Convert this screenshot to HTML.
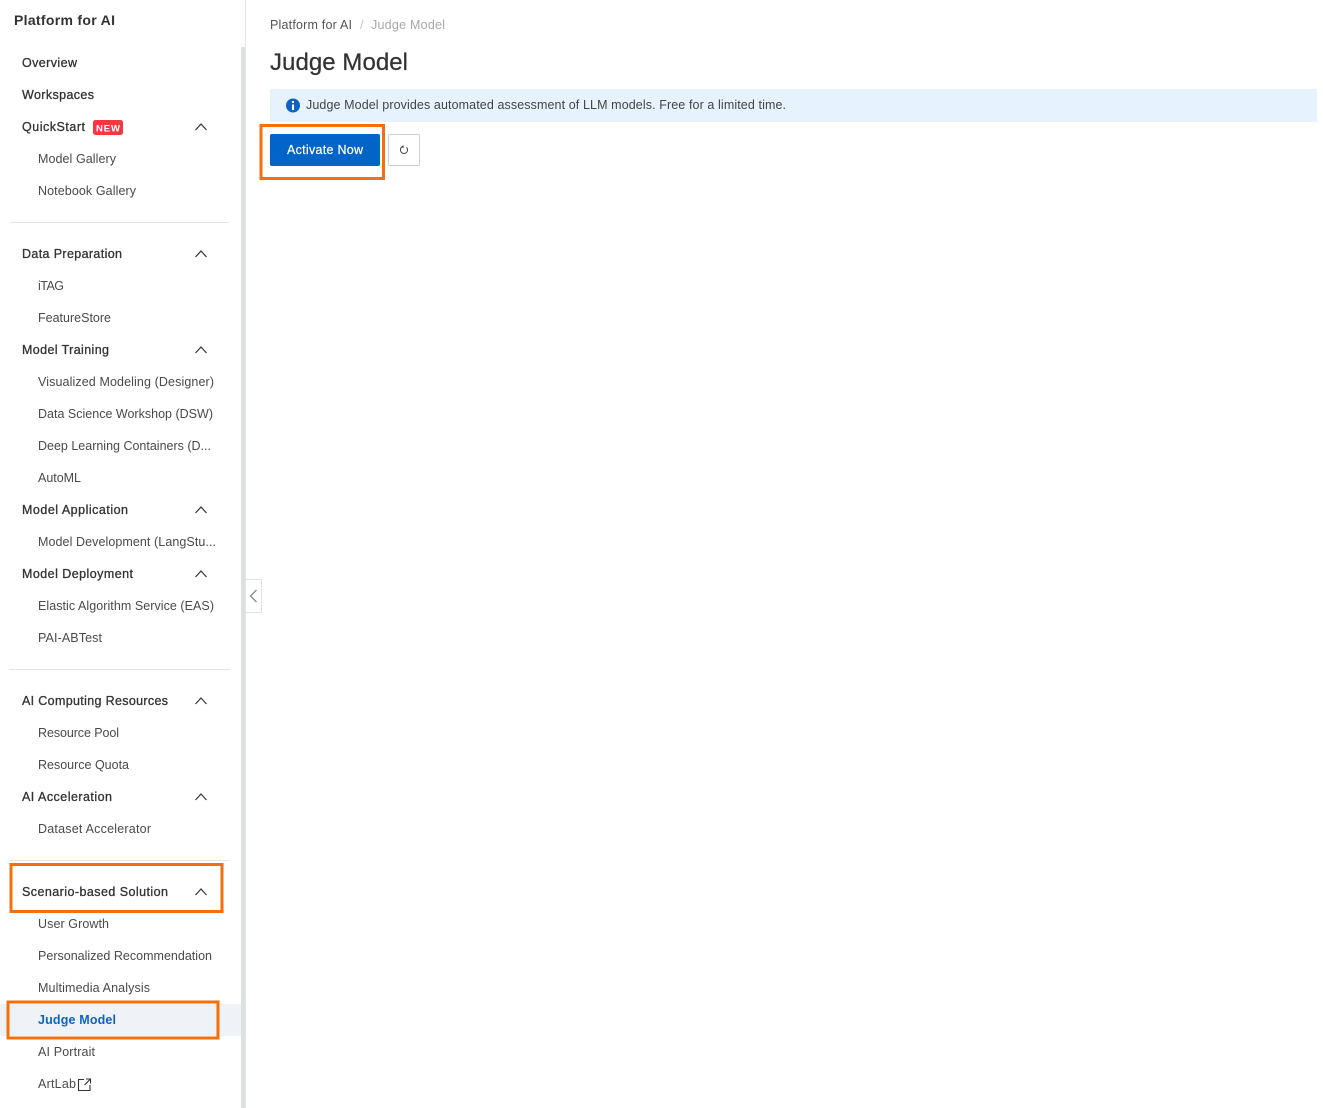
<!DOCTYPE html>
<html lang="en">
<head>
<meta charset="utf-8">
<title>Judge Model</title>
<style>
html,body{margin:0;padding:0;background:#fff;width:1323px;height:1108px;overflow:hidden}
svg{display:block}
text{font-family:"Liberation Sans",sans-serif;font-size:12.5px;fill:#333}
.h{fill:#333;stroke:#333;stroke-width:.3px}
.s{fill:#4a4a4a}
.c{fill:none;stroke:#333;stroke-width:1.2}
.o{fill:none;stroke:#f5700a;stroke-width:3}
</style>
</head>
<body>
<svg width="1323" height="1108" viewBox="0 0 1323 1108" xmlns="http://www.w3.org/2000/svg">
<rect x="245" y="0" width="1" height="1108" fill="#e5e5e5"/>
<rect x="241" y="47" width="4" height="1061" fill="#dcdfe6"/>
<rect x="0" y="1004" width="241" height="32" fill="#eff2f7"/>
<rect x="10" y="222" width="219" height="1" fill="#e5e5e5"/>
<rect x="9" y="669" width="221" height="1" fill="#e5e5e5"/>
<rect x="10" y="860" width="219" height="1" fill="#e5e5e5"/>

<text x="14" y="25" textLength="101" style="font-size:14px;font-weight:bold">Platform for AI</text>

<text class="h" x="22" y="67" textLength="55">Overview</text>
<text class="h" x="22" y="99" textLength="72">Workspaces</text>
<text class="h" x="22" y="131" textLength="63">QuickStart</text>
<rect x="93" y="120" width="30" height="15" rx="2.5" fill="#f5383f"/>
<text x="96" y="131.500" textLength="24" style="font-size:9.500px;font-weight:bold;fill:#fff">NEW</text>
<text class="s" x="38" y="163" textLength="78">Model Gallery</text>
<text class="s" x="38" y="195" textLength="98">Notebook Gallery</text>

<text class="h" x="22" y="258" textLength="100">Data Preparation</text>
<text class="s" x="38" y="290" textLength="26">iTAG</text>
<text class="s" x="38" y="322" textLength="73">FeatureStore</text>
<text class="h" x="22" y="354" textLength="87">Model Training</text>
<text class="s" x="38" y="386" textLength="176">Visualized Modeling (Designer)</text>
<text class="s" x="38" y="418" textLength="175">Data Science Workshop (DSW)</text>
<text class="s" x="38" y="450" textLength="173">Deep Learning Containers (D...</text>
<text class="s" x="38" y="482" textLength="43">AutoML</text>
<text class="h" x="22" y="514" textLength="106">Model Application</text>
<text class="s" x="38" y="546" textLength="178">Model Development (LangStu...</text>
<text class="h" x="22" y="578" textLength="111">Model Deployment</text>
<text class="s" x="38" y="610" textLength="176">Elastic Algorithm Service (EAS)</text>
<text class="s" x="38" y="642" textLength="64">PAI-ABTest</text>

<text class="h" x="22" y="705" textLength="146">AI Computing Resources</text>
<text class="s" x="38" y="737" textLength="81">Resource Pool</text>
<text class="s" x="38" y="769" textLength="91">Resource Quota</text>
<text class="h" x="22" y="801" textLength="90">AI Acceleration</text>
<text class="s" x="38" y="833" textLength="113">Dataset Accelerator</text>

<text class="h" x="22" y="896" textLength="146">Scenario-based Solution</text>
<text class="s" x="38" y="928" textLength="71">User Growth</text>
<text class="s" x="38" y="960" textLength="174">Personalized Recommendation</text>
<text class="s" x="38" y="992" textLength="112">Multimedia Analysis</text>
<text x="38" y="1024" textLength="78" style="font-weight:bold;fill:#0f62c0">Judge Model</text>
<text class="s" x="38" y="1056" textLength="57">AI Portrait</text>
<text class="s" x="38" y="1088" textLength="38">ArtLab</text>
<path d="M84 1079.500H78.500V1090.500H90V1085M84.500 1085L90 1079.500M86 1079H90.500V1083.500" fill="none" stroke="#333" stroke-width="1.100"/>

<path class="c" d="M195.500 130L201 124L206.500 130"/>
<path class="c" d="M195.500 257L201 251L206.500 257"/>
<path class="c" d="M195.500 353L201 347L206.500 353"/>
<path class="c" d="M195.500 513L201 507L206.500 513"/>
<path class="c" d="M195.500 577L201 571L206.500 577"/>
<path class="c" d="M195.500 704L201 698L206.500 704"/>
<path class="c" d="M195.500 800L201 794L206.500 800"/>
<path class="c" d="M195.500 895L201 889L206.500 895"/>

<path d="M246 579.500H261.500V612.500H246" fill="#fff" stroke="#e3e3e3"/>
<path d="M256.500 590L250.500 596L256.500 602" fill="none" stroke="#8c8c8c" stroke-width="1.400"/>

<text x="270" y="29" textLength="82" style="fill:#555">Platform for AI</text>
<text x="360" y="29" style="fill:#c8c8c8">/</text>
<text x="371" y="29" textLength="74" style="fill:#a8a8a8">Judge Model</text>
<text x="270" y="70" textLength="138" style="font-size:24px;fill:#333;stroke:#333;stroke-width:.25px">Judge Model</text>

<rect x="270" y="89" width="1047" height="33" fill="#e6f3fe"/>
<circle cx="293" cy="105.500" r="7" fill="#0f62c0"/>
<rect x="292" y="104.500" width="2" height="5.500" fill="#fff"/>
<rect x="292" y="101" width="2" height="2" fill="#fff"/>
<text x="306" y="109" textLength="480" style="fill:#444">Judge Model provides automated assessment of LLM models. Free for a limited time.</text>

<rect x="270" y="134" width="110" height="32" rx="2" fill="#0064c8"/>
<text x="287" y="154" textLength="76" style="fill:#fff;stroke:#fff;stroke-width:.2px">Activate Now</text>
<rect x="388.500" y="134.500" width="31" height="31" rx="1" fill="#fff" stroke="#cfcfcf"/>
<path d="M402.300 146.700A3.600 3.600 0 1 0 406.500 147.300" fill="none" stroke="#444" stroke-width="1"/>
<path d="M403.500 145V148.200L401.300 146.700Z" fill="#444"/>

<rect x="261" y="125.500" width="122.500" height="53" class="o"/>
<rect x="11" y="864.500" width="211" height="47" class="o"/>
<rect x="8" y="1002" width="210" height="36" class="o"/>
</svg>
</body>
</html>
